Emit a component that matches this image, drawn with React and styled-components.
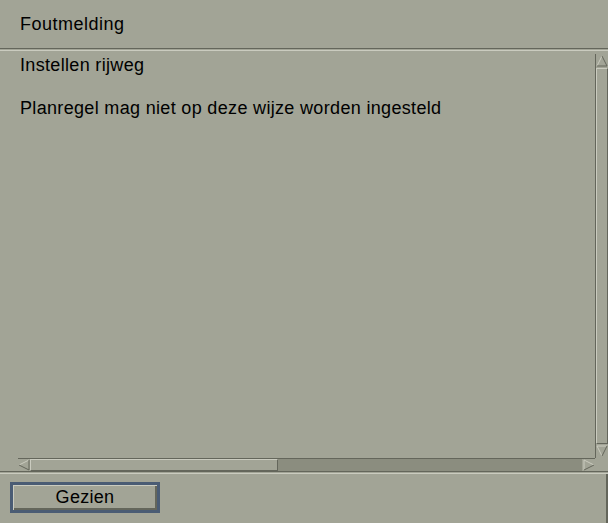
import React from "react";
import styled, { createGlobalStyle } from "styled-components";

/**
 * =Theme
 ******************************/

const COL = {
	bg: "#a2a496",
	light: "#cacbbf",
	dark: "#64665b",
	trough: "#8b8d7f",
	focus: "#4a5c74",
	text: "#000000"
};

const GlobalStyle = createGlobalStyle`
	*, *::before, *::after {
		box-sizing: border-box;
	}

	html, body {
		margin: 0;
		padding: 0;
		background: ${COL.bg};
	}

	body {
		font-family: "Liberation Sans", Arial, sans-serif;
		font-size: 18px;
		color: ${COL.text};
	}
`;

/**
 * =Styles
 ******************************/

const Dialog = styled.div`
	width: 608px;
	height: 523px;
	background: ${COL.bg};
	display: flex;
	flex-direction: column;
	overflow: hidden;
`;

const Header = styled.div`
	flex: 0 0 48px;
	padding-left: 20px;
	display: flex;
	align-items: center;
	font-size: 18px;
	letter-spacing: 0.5px;
`;

const Etched = styled.div`
	flex: 0 0 3px;
	border-top: 1px solid ${COL.dark};
	border-bottom: 1px solid ${COL.light};
	background: ${COL.bg};
`;

const Scrolled = styled.div`
	flex: 1;
	display: grid;
	grid-template-columns: 18px 1fr 13px;
	grid-template-rows: 1fr 13px;
	padding-top: 1px;
`;

const Content = styled.div`
	grid-column: 1 / 3;
	grid-row: 1;
	padding: 3px 0 0 20px;
	line-height: 21px;
	font-size: 18px;
	letter-spacing: 0.33px;
`;

const Line = styled.p`
	margin: 0 0 ${(p) => p.$gap || 0}px;
	white-space: pre;
`;

const VBar = styled.div`
	grid-column: 3;
	grid-row: 1;
	margin-top: 2px;
	display: flex;
	flex-direction: column;
	border-left: 1px solid ${COL.dark};
	background: ${COL.bg};
`;

const HBar = styled.div`
	grid-column: 2;
	grid-row: 2;
	display: flex;
	border-top: 1px solid ${COL.dark};
	background: ${COL.trough};
`;

const Arrow = styled.div`
	flex: 0 0 ${(p) => p.$size}px;
	width: ${(p) => (p.$vertical ? "100%" : `${p.$size}px`)};
	height: ${(p) => (p.$vertical ? `${p.$size}px` : "100%")};
	background: ${COL.bg};
	display: flex;
	align-items: center;
	justify-content: center;

	svg {
		display: block;
	}
`;

const Thumb = styled.div`
	flex: ${(p) => (p.$width ? `0 0 ${p.$width}px` : 1)};
	background: ${COL.bg};
	border-top: 1px solid ${COL.light};
	border-left: 1px solid ${COL.light};
	border-right: 1px solid ${COL.dark};
	border-bottom: 1px solid ${COL.dark};
`;

const Trough = styled.div`
	flex: 1;
	background: ${COL.trough};
`;

const Footer = styled.div`
	flex: 0 0 49px;
	padding: 8px 0 0 10px;
	border-right: 2px solid ${COL.dark};
`;

const Button = styled.button`
	width: 150px;
	height: 31px;
	padding: 0;
	font-family: "Liberation Sans", Arial, sans-serif;
	font-size: 18px;
	letter-spacing: 0.3px;
	color: ${COL.text};
	background: ${COL.bg};
	border: 3px solid ${COL.focus};
	box-shadow: inset 1px 1px 0 ${COL.light}, inset -2px -2px 0 ${COL.dark};
	cursor: pointer;
`;

/**
 * =Parts
 ******************************/

const arrowPaths = {
	up: { fill: "6,1 11,11 1,11", light: "M1,11 L6,1", dark: "M6,1 L11,11 L1,11" },
	down: { fill: "1,1 11,1 6,11", light: "M1,1 L11,1 M1,1 L6,11", dark: "M11,1 L6,11" },
	left: { fill: "1,6 11,1 11,11", light: "M1,6 L11,1", dark: "M11,1 L11,11 L1,6" },
	right: { fill: "1,1 11,6 1,11", light: "M1,11 L1,1 L11,6", dark: "M11,6 L1,11" }
};

function ArrowIcon({ dir }) {
	const p = arrowPaths[dir];

	return (
		<svg width="12" height="12" viewBox="0 0 12 12">
			<polygon points={p.fill} fill={COL.bg} />
			<path d={p.light} fill="none" stroke={COL.light} strokeWidth="1" />
			<path d={p.dark} fill="none" stroke={COL.dark} strokeWidth="1" />
		</svg>
	);
}

/**
 * =App
 ******************************/

export default function App() {
	return (
		<Dialog>
			<GlobalStyle />

			<Header>Foutmelding</Header>
			<Etched />

			<Scrolled>
				<Content>
					<Line $gap={22}>Instellen rijweg</Line>
					<Line>Planregel mag niet op deze wijze worden ingesteld</Line>
				</Content>

				<VBar>
					<Arrow $vertical $size={14}>
						<ArrowIcon dir="up" />
					</Arrow>
					<Thumb />
					<Arrow $vertical $size={14}>
						<ArrowIcon dir="down" />
					</Arrow>
				</VBar>

				<HBar>
					<Arrow $size={12}>
						<ArrowIcon dir="left" />
					</Arrow>
					<Thumb $width={248} />
					<Trough />
					<Arrow $size={13}>
						<ArrowIcon dir="right" />
					</Arrow>
				</HBar>
			</Scrolled>

			<Etched />

			<Footer>
				<Button>Gezien</Button>
			</Footer>
		</Dialog>
	);
}
